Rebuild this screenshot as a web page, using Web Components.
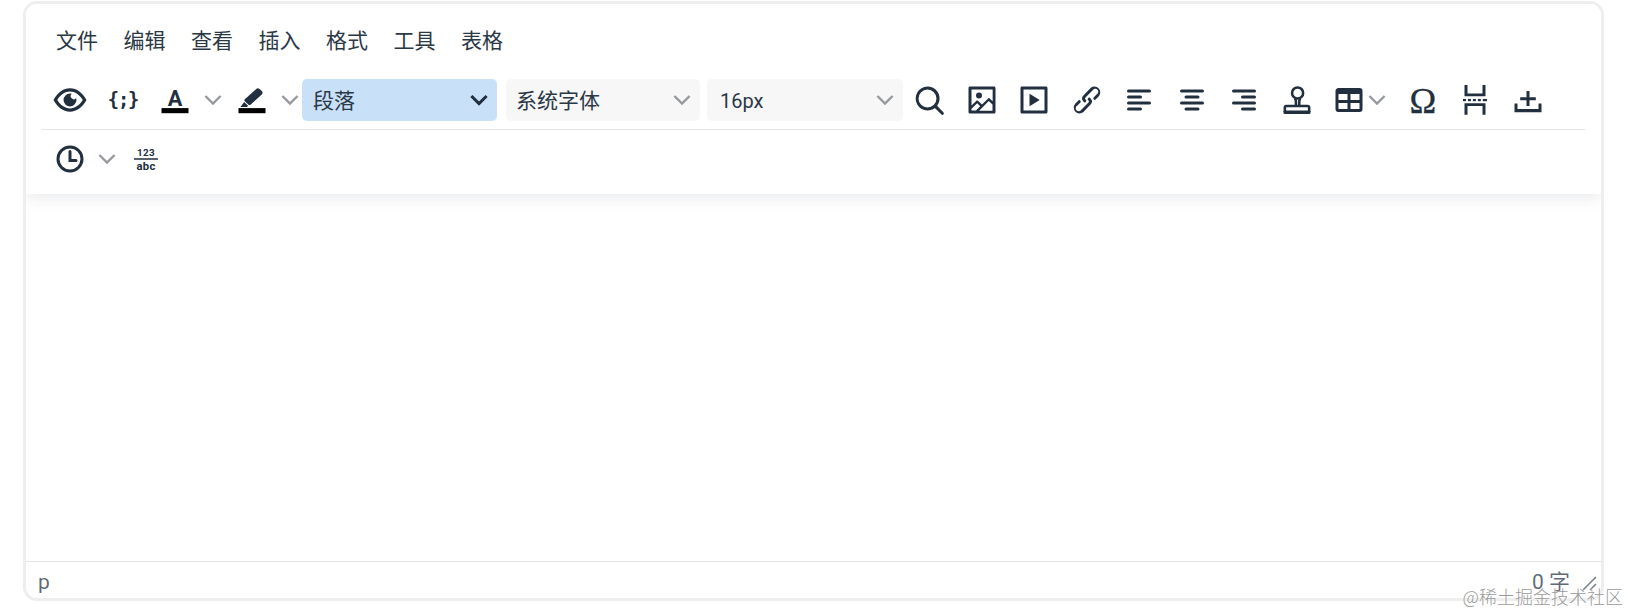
<!DOCTYPE html>
<html lang="zh">
<head>
<meta charset="utf-8">
<title>editor</title>
<style>
  html, body { margin: 0; background: #fff; height: 100%; }
  body { font-family: Roboto, "Noto Sans CJK SC", sans-serif; color: #222f3e; overflow: hidden; }
</style>
</head>
<body>
<x-page>
  <x-editor>
    <x-menubar slot="menu">
      <x-menu-item>文件</x-menu-item>
      <x-menu-item>编辑</x-menu-item>
      <x-menu-item>查看</x-menu-item>
      <x-menu-item>插入</x-menu-item>
      <x-menu-item>格式</x-menu-item>
      <x-menu-item>工具</x-menu-item>
      <x-menu-item>表格</x-menu-item>
    </x-menubar>
    <x-toolbar slot="toolbar" line>
      <x-tool icon="preview"></x-tool>
      <x-tool icon="code"></x-tool>
      <x-tool icon="forecolor"></x-tool>
      <x-chevron style="--w:22px"></x-chevron>
      <x-tool icon="highlight" style="margin-left:2px"></x-tool>
      <x-chevron style="--w:24px"></x-chevron>
      <x-select active style="--w:195px;--pad:11px">段落</x-select>
      <x-select style="--w:194px;--pad:10px;margin-left:9px">系统字体</x-select>
      <x-select style="--w:196px;--pad:13px;margin-left:7px;font-size:20px">16px</x-select>
      <x-tool icon="search"></x-tool>
      <x-tool icon="image"></x-tool>
      <x-tool icon="media"></x-tool>
      <x-tool icon="link"></x-tool>
      <x-tool icon="left"></x-tool>
      <x-tool icon="center"></x-tool>
      <x-tool icon="right"></x-tool>
      <x-tool icon="stamp"></x-tool>
      <x-tool icon="table" style="margin-right:-12px"></x-tool>
      <x-chevron style="--w:26px;margin-right:7px"></x-chevron>
      <x-tool icon="omega"></x-tool>
      <x-tool icon="pagebreak"></x-tool>
      <x-tool icon="upload"></x-tool>
    </x-toolbar>
    <x-toolbar slot="toolbar">
      <x-tool icon="clock"></x-tool>
      <x-chevron style="--w:20px"></x-chevron>
      <x-tool icon="wordcount" style="--tw:54px;margin-left:2px"></x-tool>
    </x-toolbar>
    <x-status slot="status" count="0 字">p</x-status>
  </x-editor>
  <x-watermark>@稀土掘金技术社区</x-watermark>
</x-page>

<script>
// icon paths, 24 unit grid like the editor's own icon pack
const ICONS = {
  preview: '<path d="M12 4.2c4.6 0 8.500 3.100 11 7.800-2.500 4.700-6.400 7.800-11 7.800S3.500 16.700 1 12c2.500-4.700 6.400-7.800 11-7.800zm0 2.200C8.700 6.400 5.600 8.600 3.500 12c2.100 3.400 5.200 5.600 8.500 5.600s6.400-2.200 8.500-5.600c-2.100-3.400-5.200-5.600-8.500-5.600z"/><path d="M12 7.700a4.300 4.300 0 1 0 4.300 4.300c0-.4-.1-.8-.2-1.100a2 2 0 0 1-3-3c-.3-.1-.7-.2-1.100-.2z"/>',
  code: '<text x="12" y="16.300" text-anchor="middle" font-family="\'DejaVu Sans Mono\',monospace" font-weight="700" font-size="12.500" letter-spacing="-.8">{;}</text>',
  forecolor: '<text x="12" y="15.800" text-anchor="middle" font-family="Roboto,sans-serif" font-weight="700" font-size="14.500">A</text><rect x="3" y="17.400" width="18" height="3.400" fill="#000"/>',
  highlight: '<path d="M14.700 4.800a1.700 1.700 0 0 1 2.300-.1l1.400 1.200a1.700 1.700 0 0 1 .1 2.400l-7.500 6.800c-.4.300-.9.300-1.300 0l-2.500-2.300c-.4-.4-.4-1 0-1.300l7.500-6.700z"/><path d="M6.800 13.400l2.600 2.400-.8.800H4.300l2.500-3.200z"/><rect x="3" y="17.400" width="18" height="3.400" fill="#000"/>',
  search: '<path d="M16 17.300a8 8 0 1 1 1.400-1.400l4.300 4.400a1 1 0 0 1-1.400 1.400l-4.400-4.300zm-5-.3a6 6 0 1 0 0-12 6 6 0 0 0 0 12z"/>',
  image: '<path d="m5 15.700 3.300-3.200c.3-.3.700-.3 1 0L12 15l4.100-4c.3-.4.800-.4 1 0l2 1.900V5H5v10.700zM5 18v1h3l2.800-2.900-2-2L5 17.900zm14-3-2.500-2.400-6.400 6.500H19v-4zM4 3h16c.6 0 1 .4 1 1v16c0 .6-.4 1-1 1H4a1 1 0 0 1-1-1V4c0-.6.4-1 1-1zm6 8a2 2 0 1 0 0-4 2 2 0 0 0 0 4z"/>',
  media: '<path d="M4 3h16c.6 0 1 .4 1 1v16c0 .6-.4 1-1 1H4a1 1 0 0 1-1-1V4c0-.6.4-1 1-1zm1 2v14h14V5H5z"/><path d="M9 7.800v8.400l6.800-4.200L9 7.800z"/>',
  link: '<path d="M6.200 12.300a1 1 0 0 1 1.400 1.400l-2 2a2 2 0 1 0 2.600 2.800l4.800-4.800a1 1 0 0 0 0-1.400 1 1 0 1 1 1.400-1.300 2.900 2.900 0 0 1 0 4L9.600 20a3.900 3.900 0 0 1-5.500-5.500l2-2zm11.600-.6a1 1 0 0 1-1.400-1.400l2-2a2 2 0 1 0-2.600-2.800L11 10.300a1 1 0 0 0 0 1.400A1 1 0 1 1 9.600 13a2.900 2.900 0 0 1 0-4L14.400 4a3.900 3.900 0 0 1 5.500 5.500l-2 2z"/>',
  left: '<path d="M5 5h14a1 1 0 0 1 0 2H5a1 1 0 1 1 0-2zm0 4h8a1 1 0 0 1 0 2H5a1 1 0 1 1 0-2zm0 8h8a1 1 0 0 1 0 2H5a1 1 0 0 1 0-2zm0-4h14a1 1 0 0 1 0 2H5a1 1 0 0 1 0-2z"/>',
  center: '<path d="M5 5h14a1 1 0 0 1 0 2H5a1 1 0 1 1 0-2zm3 4h8a1 1 0 0 1 0 2H8a1 1 0 0 1 0-2zm0 8h8a1 1 0 0 1 0 2H8a1 1 0 0 1 0-2zm-3-4h14a1 1 0 0 1 0 2H5a1 1 0 0 1 0-2z"/>',
  right: '<path d="M5 5h14a1 1 0 0 1 0 2H5a1 1 0 1 1 0-2zm6 4h8a1 1 0 0 1 0 2h-8a1 1 0 0 1 0-2zm0 8h8a1 1 0 0 1 0 2h-8a1 1 0 0 1 0-2zm-6-4h14a1 1 0 0 1 0 2H5a1 1 0 0 1 0-2z"/>',
  stamp: '<g fill="none" stroke="#222f3e" stroke-width="1.700"><circle cx="12.400" cy="7.300" r="3.700"/><path d="M10.600 10.800c.5.800.7 1.600.7 2.600v3M14.200 10.800c-.5.800-.7 1.600-.7 2.600v3"/><path d="M3.900 20v-3c0-.7.400-1 1-1h14.200c.6 0 1 .3 1 1v3"/></g><rect x="3" y="19" width="18" height="2.300" rx=".8"/>',
  table: '<path d="M19 4a2 2 0 0 1 2 2v12a2 2 0 0 1-2 2H5a2 2 0 0 1-2-2V6c0-1.100.9-2 2-2h14zM5 14v4h6v-4H5zm14 0h-6v4h6v-4zm0-6h-6v4h6V8zM5 12h6V8H5v4z"/>',
  omega: '<text x="12" y="20.400" text-anchor="middle" font-family="\'Liberation Serif\',serif" font-size="24" stroke="#222f3e" stroke-width=".2">Ω</text>',
  pagebreak: '<path d="M5 2h2v5.700h10V2h2v7.500H5V2zM5 21.800h2v-5.800h10v5.800h2v-7.600H5v7.600z"/><rect x="4" y="11.300" width="2" height="1.500"/><rect x="7.300" y="11.300" width="2" height="1.500"/><rect x="10.600" y="11.300" width="2" height="1.500"/><rect x="13.900" y="11.300" width="2" height="1.500"/><rect x="17.200" y="11.300" width="2.800" height="1.500"/>',
  upload: '<path d="M11 6h2v4.200h4.200v2H13v3.800h-2v-3.800H6.800v-2H11V6z"/><path d="M3 14.300h2V18h14v-3.700h2v5.900H3v-5.900z"/>',
  clock: '<path d="M12 19a7 7 0 1 0 0-14 7 7 0 0 0 0 14zm0 2a9 9 0 1 1 0-18 9 9 0 0 1 0 18z"/><path d="M16 12h-3V7a1 1 0 0 0-2 0v7h5a1 1 0 0 0 0-2z"/>',
  wordcount: '<text x="12" y="10" text-anchor="middle" font-family="Roboto,sans-serif" font-weight="700" font-size="6.600" letter-spacing=".2">123</text><rect x="4" y="11.500" width="16" height="1"/><text x="12" y="19.300" text-anchor="middle" font-family="Roboto,sans-serif" font-weight="700" font-size="7.500" letter-spacing=".2">abc</text>'
};

const CHEVRON = '<svg viewBox="0 0 10 10"><path d="M1.200 3 5 6.800 8.800 3" fill="none" stroke="currentColor" stroke-width="1.200"/></svg>';

class XPage extends HTMLElement {
  constructor() {
    super();
    this.attachShadow({mode: 'open'});
    this.shadowRoot.innerHTML = `
      <style>
        :host { display: block; position: relative; height: 613px; padding: 1px 26px 0 23px; box-sizing: border-box; }
      </style>
      <slot></slot>
    `;
  }
}

class XEditor extends HTMLElement {
  constructor() {
    super();
    this.attachShadow({mode: 'open'});
    this.shadowRoot.innerHTML = `
      <style>
        :host {
          display: flex; flex-direction: column; height: 600px; box-sizing: border-box;
          border: 3px solid #eeeeee; border-radius: 14px; overflow: hidden; background: #fff;
        }
        header {
          padding: 0 16px 6px 16px; background: #fff;
          box-shadow: 0 3px 16px rgba(34, 47, 62, .11); position: relative;
        }
        main { flex: 1; }
      </style>
      <header>
        <slot name="menu"></slot>
        <slot name="toolbar"></slot>
      </header>
      <main></main>
      <slot name="status"></slot>
    `;
  }
}

class XMenubar extends HTMLElement {
  constructor() {
    super();
    this.attachShadow({mode: 'open'});
    this.shadowRoot.innerHTML = `
      <style>
        :host { display: flex; gap: 25.500px; padding: 20px 14px 0; height: 56px; box-sizing: border-box; }
      </style>
      <slot></slot>
    `;
  }
}

class XMenuItem extends HTMLElement {
  constructor() {
    super();
    this.attachShadow({mode: 'open'});
    this.shadowRoot.innerHTML = `
      <style>
        :host { display: block; font: 400 21px/30px "Noto Sans CJK SC", sans-serif; color: #2b3846; }
      </style>
      <slot></slot>
    `;
  }
}

class XToolbar extends HTMLElement {
  constructor() {
    super();
    this.attachShadow({mode: 'open'});
    this.shadowRoot.innerHTML = `
      <style>
        :host { display: flex; align-items: center; height: 58px; padding-left: 2px; }
        :host([line]) { height: 42px; padding: 19px 0 8px 2px; border-bottom: 1px solid #e3e3e3; }
      </style>
      <slot></slot>
    `;
  }
}

class XTool extends HTMLElement {
  constructor() {
    super();
    this.attachShadow({mode: 'open'});
    this.shadowRoot.innerHTML = `
      <style>
        :host { display: flex; flex: none; align-items: center; justify-content: center; width: var(--tw, 52.500px); height: 42px; }
        svg { width: 36px; height: 36px; fill: #222f3e; overflow: visible; }
      </style>
      <svg viewBox="0 0 24 24">${ICONS[this.getAttribute('icon')] || ''}</svg>
    `;
  }
}

class XChevron extends HTMLElement {
  constructor() {
    super();
    this.attachShadow({mode: 'open'});
    this.shadowRoot.innerHTML = `
      <style>
        :host { display: flex; flex: none; align-items: center; justify-content: center; width: var(--w, 24px); height: 42px; color: #96999d; }
        svg { width: 20px; height: 20px; flex: none; }
      </style>
      ${CHEVRON}
    `;
  }
}

class XSelect extends HTMLElement {
  constructor() {
    super();
    this.attachShadow({mode: 'open'});
    this.shadowRoot.innerHTML = `
      <style>
        :host {
          display: flex; flex: none; align-items: center; justify-content: space-between;
          width: var(--w, 195px); height: 42px; box-sizing: border-box; padding: 0 8px 0 var(--pad, 11px);
          background: #f7f7f8; border-radius: 5px; color: #2b3846;
          font: 400 21px/42px Roboto, "Noto Sans CJK SC", sans-serif;
        }
        :host([active]) { background: #c9e0f9; }
        span { padding-top: 2px; }
        svg { width: 20px; height: 20px; color: #96999d; flex: none; }
        :host([active]) svg { color: #222f3e; }
        :host([active]) path { stroke-width: 1.500; }
      </style>
      <span><slot></slot></span>
      ${CHEVRON}
    `;
  }
}

class XStatus extends HTMLElement {
  constructor() {
    super();
    this.attachShadow({mode: 'open'});
    this.shadowRoot.innerHTML = `
      <style>
        :host {
          display: flex; align-items: center; justify-content: space-between; height: 37px; box-sizing: border-box;
          border-top: 1px solid #e3e3e3; padding: 4px 3px 0 12px; color: rgba(34, 47, 62, .72);
          font: 400 21px/32px Roboto, "Noto Sans CJK SC", sans-serif;
        }
        .right { display: flex; align-items: center; gap: 10px; }
        svg { width: 18px; height: 18px; margin-top: 2px; }
      </style>
      <slot></slot>
      <div class="right">
        <span id="count"></span>
        <svg viewBox="0 0 18 18"><path d="M3 16 16 3M10 16l6-6" fill="none" stroke="#7c838b" stroke-width="1.600"/></svg>
      </div>
    `;
    this.shadowRoot.getElementById('count').textContent = this.getAttribute('count');
  }
}

class XWatermark extends HTMLElement {
  constructor() {
    super();
    this.attachShadow({mode: 'open'});
    this.shadowRoot.innerHTML = `
      <style>
        :host {
          position: absolute; right: 7px; bottom: 5px; white-space: nowrap;
          font: 300 18px/24px "Noto Sans CJK SC", sans-serif; color: #9a9a9a;
          text-shadow: 0 0 2px #fff;
        }
      </style>
      <slot></slot>
    `;
  }
}

customElements.define('x-page', XPage);
customElements.define('x-editor', XEditor);
customElements.define('x-menubar', XMenubar);
customElements.define('x-menu-item', XMenuItem);
customElements.define('x-toolbar', XToolbar);
customElements.define('x-tool', XTool);
customElements.define('x-chevron', XChevron);
customElements.define('x-select', XSelect);
customElements.define('x-status', XStatus);
customElements.define('x-watermark', XWatermark);
</script>
</body>
</html>
